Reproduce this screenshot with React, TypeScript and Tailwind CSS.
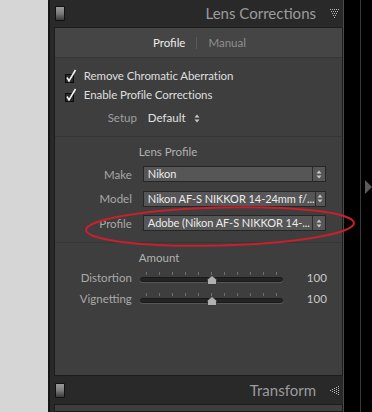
import React from 'react';

const font = { fontFamily: 'Lato, "Noto Sans", sans-serif' };

// dotted triangle used by panel headers (Lightroom style)
const DotTriangle: React.FC<{ dir: 'down' | 'left' }> = ({ dir }) => {
  const dots: [number, number][] = [];
  for (let r = 0; r < 5; r++) {
    for (let c = 0; c < 5 - r; c++) {
      const a = r + c * 2;
      const b = r * 2;
      dots.push(dir === 'down' ? [a, b] : [8 - b, a]);
    }
  }
  return (
    <svg width="9" height="9" viewBox="0 0 9 9" className="shrink-0">
      {dots.map(([x, y], i) => (
        <rect key={i} x={x} y={y} width="1" height="1" fill="#b5b5b5" />
      ))}
    </svg>
  );
};

const Toggle = () => (
  <div className="w-[10px] h-[15px] border border-[#111] bg-gradient-to-b from-[#9a9a9a] via-[#7a7a7a] to-[#3a3a3a] rounded-[1px]" />
);

const Check: React.FC<{ label: string }> = ({ label }) => (
  <div className="flex items-center h-[19px] pl-[10px]">
    <svg width="12" height="14" viewBox="0 0 12 14" className="shrink-0">
      <rect x="0.5" y="5.5" width="8" height="8" fill="#2a2a2a" stroke="#0c0c0c" />
      <path d="M2 8.5 L4 12 L10.5 1" fill="none" stroke="#f2f2f2" strokeWidth="1.6" />
    </svg>
    <span className="ml-[7px] text-[11.5px] tracking-[-0.1px] text-[#dedede]">{label}</span>
  </div>
);

const Spinner = () => (
  <svg width="6" height="9" viewBox="0 0 6 9">
    <path d="M3 0.5 L5.5 3.5 H0.5 Z" fill="#c8c8c8" />
    <path d="M3 8.5 L5.5 5.5 H0.5 Z" fill="#c8c8c8" />
  </svg>
);

const Select: React.FC<{ label: string; value: string }> = ({ label, value }) => (
  <div className="flex items-center h-[24.5px]">
    <span className="w-[77px] text-right text-[11.5px] text-[#a9a9a9]">{label}</span>
    <div className="ml-[11px] w-[183px] h-[16px] flex border border-[#262626] bg-[#565656]">
      <span className="flex-1 pl-[4px] text-[11px] tracking-[-0.05px] leading-[14px] text-[#ececec] whitespace-nowrap">
        {value}
      </span>
      <span className="w-[13px] border-l border-[#2c2c2c] flex items-center justify-center">
        <Spinner />
      </span>
    </div>
  </div>
);

const Slider: React.FC<{ label: string; value: number }> = ({ label, value }) => (
  <div className="flex items-center h-[21px]">
    <span className="w-[77px] text-right text-[11.5px] text-[#a9a9a9]">{label}</span>
    <div className="relative ml-[8px] w-[143px] h-[14px]">
      <div className="absolute left-[6px] right-[6px] top-[1px] flex justify-between">
        {Array.from({ length: 11 }).map((_, i) => (
          <div key={i} className="w-px h-[3px] bg-[#6e6e6e]" />
        ))}
      </div>
      <div className="absolute left-0 right-0 top-[6px] h-[5px] rounded-full bg-[#242424] border border-[#1a1a1a] shadow-[0_1px_0_#575757]" />
      <svg width="10" height="10" viewBox="0 0 10 10" className="absolute left-[67px] top-[4px]">
        <path d="M5 0.5 L9.5 4.5 V9.5 H0.5 V4.5 Z" fill="#b0b0b0" stroke="#3a3a3a" />
      </svg>
    </div>
    <span className="w-[44px] text-right text-[11.5px] text-[#c9c9c9]">{value}</span>
  </div>
);

export default function App() {
  return (
    <div className="relative flex w-[372px] h-[412px] bg-black overflow-hidden" style={font}>
      <div className="w-[48px] bg-[#d6d6d6]" />
      <div className="w-[2px] bg-[#151515]" />
      {/* right panel column */}
      <div className="w-[294px] bg-[#292929] flex flex-col">
        <div className="h-[27px] flex items-center pl-[5px] pr-[4px]">
          <Toggle />
          <span className="ml-auto text-[15px] text-[#9c9c9c]">Lens Corrections</span>
          <span className="ml-[14px]"><DotTriangle dir="down" /></span>
        </div>
        <div className="ml-[4px] h-[349px] border border-[#1c1c1c] bg-[#3e3e3e] flex flex-col">
          <div className="h-[30px] bg-[#454545] border-b border-[#363636] flex items-center justify-center text-[11.5px] pl-[2px]">
            <span className="text-[#ececec]">Profile</span>
            <span className="mx-[11px] w-px h-[12px] bg-[#5c5c5c]" />
            <span className="text-[#8f8f8f]">Manual</span>
          </div>
          <div className="pt-[8px]">
            <Check label="Remove Chromatic Aberration" />
            <Check label="Enable Profile Corrections" />
          </div>
          <div className="flex items-center h-[28px] text-[11.5px]">
            <span className="w-[82px] text-right text-[#a0a0a0]">Setup</span>
            <span className="ml-[11px] text-[#e2e2e2]">Default</span>
            <span className="ml-[8px] mt-[1px]"><Spinner /></span>
          </div>
          <div className="mt-[4px] border-t border-[#353535]" />
          <div className="h-[20px] mt-[5px] flex items-center pl-[84px] text-[11.5px] text-[#b2b2b2]">Lens Profile</div>
          <div>
            <Select label="Make" value="Nikon" />
            <Select label="Model" value="Nikon AF-S NIKKOR 14-24mm f/..." />
            <Select label="Profile" value="Adobe (Nikon AF-S NIKKOR 14-..." />
          </div>
          <div className="mt-[6px] border-t border-[#353535]" />
          <div className="h-[20px] mt-[5px] flex items-center pl-[84px] text-[11.5px] text-[#b2b2b2]">Amount</div>
          <Slider label="Distortion" value={100} />
          <Slider label="Vignetting" value={100} />
        </div>
        <div className="h-[28px] flex items-center pl-[5px] pr-[4px]">
          <Toggle />
          <span className="ml-auto text-[15px] text-[#9c9c9c]">Transform</span>
          <span className="ml-[14px]"><DotTriangle dir="left" /></span>
        </div>
        <div className="ml-[4px] flex-1 border border-[#1c1c1c] bg-[#3e3e3e]" />
      </div>
      <div className="w-px bg-[#4a4a4a]" />
      <div className="flex-1 flex">
        <div className="w-[16px]" />
        <div className="w-px bg-[#3a3a3a]" />
        <div className="flex-1 pt-[180px] pl-[4px]">
          <svg width="7" height="14" viewBox="0 0 7 14">
            <path d="M0 0 L7 7 L0 14 Z" fill="#5a5a5a" />
          </svg>
        </div>
      </div>
      {/* red hand-drawn ellipse annotation */}
      <svg className="absolute left-0 top-0 pointer-events-none" width="372" height="412">
        <ellipse cx="220" cy="226.5" rx="134" ry="19" fill="none" stroke="#c8202c" strokeWidth="2" transform="rotate(-1.5 220 226.5)" />
      </svg>
    </div>
  );
}
